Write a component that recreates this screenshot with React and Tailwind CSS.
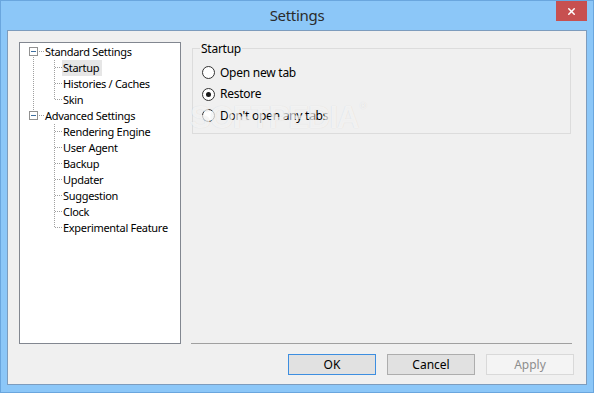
import { X } from 'lucide-react'

const TREE = [
  { label: 'Standard Settings', children: ['Startup', 'Histories / Caches', 'Skin'] },
  {
    label: 'Advanced Settings',
    children: ['Rendering Engine', 'User Agent', 'Backup', 'Updater', 'Suggestion', 'Clock', 'Experimental Feature'],
  },
]

// connector lines + expander boxes of the tree view
function TreeLines() {
  const dot = { stroke: '#a0a0a0', strokeDasharray: '1 1', shapeRendering: 'crispEdges' }
  const box = (y) => (
    <g key={'b' + y}>
      <rect x="9.5" y={y - 3.5} width="8" height="8" fill="#fff" stroke="#919191" shapeRendering="crispEdges" />
      <path d={`M11 ${y + 0.5}H16`} stroke="#3d6fa0" shapeRendering="crispEdges" />
      <path d={`M19 ${y + 0.5}H25`} {...dot} />
    </g>
  )
  const child = (y) => <path key={'c' + y} d={`M35 ${y + 0.5}H42`} {...dot} />
  return (
    <svg className="absolute inset-0 pointer-events-none" width="160" height="300">
      <path d="M13.5 14V68" {...dot} />
      <path d="M34.5 17V57" {...dot} />
      <path d="M34.5 81V185" {...dot} />
      {box(8)}
      {box(72)}
      {[24, 40, 56].map(child)}
      {[88, 104, 120, 136, 152, 168, 184].map(child)}
    </svg>
  )
}

function Radio({ label, checked }) {
  return (
    <div className="flex items-center gap-[5px] h-[21.5px]">
      <div className="w-[13px] h-[13px] rounded-full border border-[#333] bg-white flex items-center justify-center">
        {checked && <div className="w-[5px] h-[5px] rounded-full bg-[#1a1a1a]" />}
      </div>
      <span className="text-black tracking-[-0.25px]">{label}</span>
    </div>
  )
}

export default function App() {
  return (
    <div className="w-[594px] h-[393px] bg-[#8cc7f8] border border-[#6aa6de] flex flex-col font-['Noto_Sans',sans-serif] text-[12px] overflow-hidden">
      {/* Title bar */}
      <div className="h-[29px] flex">
        <div className="w-[37px]" />
        <div className="flex-1 flex items-center justify-center text-[15px] text-[#2b2b2b] tracking-[-0.3px] pb-[1px]">Settings</div>
        <div className="w-[31px] h-[20px] bg-[#c75050] flex items-center justify-center mr-[6px]">
          <X className="w-[11px] h-[11px] text-white" strokeWidth={3.2} />
        </div>
      </div>

      {/* Client area */}
      <div className="relative flex-1 mx-[6px] mb-[7px] bg-[#f0f0f0] border border-[#7d9cbd] flex flex-col">
        <div className="flex pl-[11px] pt-[11px] pr-[14px] gap-[10px]">
          {/* Tree */}
          <div className="relative w-[162px] h-[302px] bg-white border border-[#828790] pt-[1px] leading-[16px] text-[11px] tracking-[-0.3px] text-black">
            <TreeLines />
            {TREE.map((node) => (
              <div key={node.label}>
                <div className="h-[16px] pl-[25px] whitespace-nowrap">{node.label}</div>
                {node.children.map((c) => (
                  <div key={c} className="h-[16px] pl-[42px] whitespace-nowrap">
                    <span className={c === 'Startup' ? 'inline-block pl-[1px] pr-[3px] bg-[#e6e6e6]' : 'inline-block px-[1px]'}>{c}</span>
                  </div>
                ))}
              </div>
            ))}
          </div>

          {/* Right side */}
          <div className="flex-1 h-[302px] flex flex-col">
            <fieldset className="mx-[1px] -mt-[2px] h-[94px] border border-[#dcdcdc] pl-[9px] pt-[6px]">
              <legend className="-ml-[2px] px-[1px] leading-[16px] text-black tracking-[-0.25px] translate-y-[1px]">Startup</legend>
              <Radio label="Open new tab" />
              <Radio label="Restore" checked />
              <Radio label="Don't open any tabs" />
            </fieldset>
            <div className="flex-1" />
            <div className="h-px bg-[#a0a0a0]" />
          </div>
        </div>

        {/* Buttons */}
        <div className="flex justify-end gap-[11px] pr-[12px] mt-[10px]">
          <button className="w-[88px] h-[21px] border border-[#3d8ee0] bg-[#e1e1e1] text-black leading-none">OK</button>
          <button className="w-[88px] h-[21px] border border-[#adadad] bg-[#e1e1e1] text-black leading-none">Cancel</button>
          <button className="w-[88px] h-[21px] border border-[#d9d9d9] bg-[#f4f4f4] text-[#8d8d8d] leading-none">Apply</button>
        </div>

        {/* watermark */}
        <div className="absolute left-[182px] top-[64px] flex items-start pointer-events-none select-none">
          <span className="font-['Liberation_Sans',sans-serif] font-bold text-[31px] tracking-[-1px] text-white/70 [text-shadow:0_0_1px_rgba(0,0,0,0.12)]">
            SOFTPEDIA
          </span>
          <span className="text-[9px] text-white/80 mt-[4px] ml-[1px] [text-shadow:0_0_1px_rgba(0,0,0,0.15)]">®</span>
        </div>
      </div>
    </div>
  )
}
